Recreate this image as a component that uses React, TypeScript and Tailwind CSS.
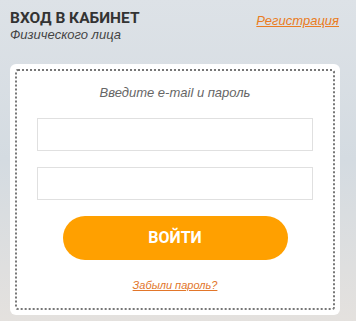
export default function App() {
  return (
    <div className="h-[321px] w-[356px] overflow-hidden bg-gradient-to-b from-[#dde2e7] via-[#d4dbe1] to-[#e4e1de] font-['Liberation_Sans',Arial,sans-serif]">
      {/* header */}
      <div className="flex items-start justify-between px-[10px] pt-[9px]">
        <div>
          <h1 className="font-['Roboto',sans-serif] text-[15.5px] leading-[18px] font-bold text-[#333]">ВХОД В КАБИНЕТ</h1>
          <p className="text-[13px] leading-[15px] italic text-[#444]">Физического лица</p>
        </div>
        <a href="#" className="mt-[2px] mr-[7px] text-[13px] italic text-[#ea7c22] underline">
          Регистрация
        </a>
      </div>

      {/* login card */}
      <div className="mt-[22px] ml-[10px] h-[251px] w-[330px] rounded-md bg-white p-[5px]">
        <div className="flex h-full flex-col items-center rounded-[3px] border-2 border-dotted border-[#777] pt-[14px]">
          <p className="text-[13px] leading-[16px] italic text-[#666]">Введите e-mail и пароль</p>
          <input className="mt-[17px] h-[33px] w-[276px] border border-[#e0e0e0] bg-white outline-none" />
          <input type="password" className="mt-[16px] h-[33px] w-[276px] border border-[#e0e0e0] bg-white outline-none" />
          <button className="mt-[16px] h-[44px] w-[225px] rounded-full bg-[#ffa000] font-['Roboto',sans-serif] text-[16px] font-bold text-white">
            ВОЙТИ
          </button>
          <a href="#" className="mt-[18px] text-[11px] leading-[14px] italic text-[#e2762a] underline">
            Забыли пароль?
          </a>
        </div>
      </div>
    </div>
  );
}
